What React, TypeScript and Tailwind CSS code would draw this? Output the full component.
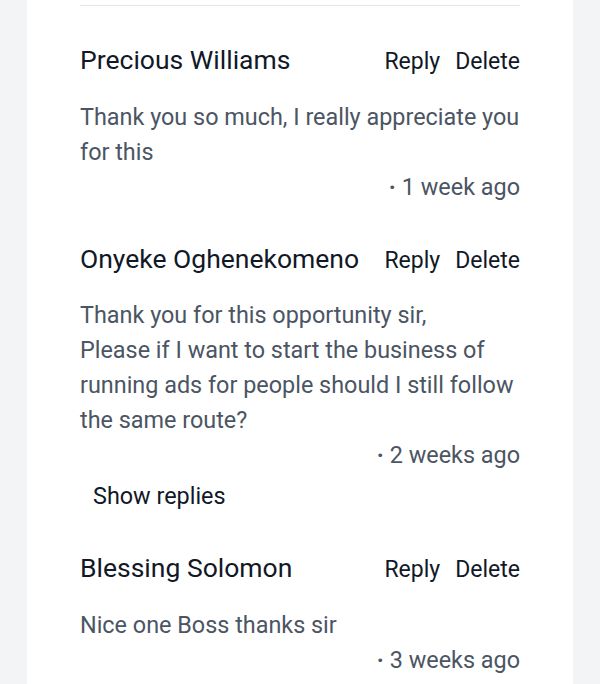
import React from "react";

type C = { name: string; body: string[]; time: string; replies?: boolean };

const comments: C[] = [
  {
    name: "Precious Williams",
    body: ["Thank you so much, I really appreciate you for this"],
    time: "1 week ago",
  },
  {
    name: "Onyeke Oghenekomeno",
    body: [
      "Thank you for this opportunity sir,",
      "Please if I want to start the business of running ads for people should I still follow the same route?",
    ],
    time: "2 weeks ago",
    replies: true,
  },
  {
    name: "Blessing Solomon",
    body: ["Nice one Boss thanks sir"],
    time: "3 weeks ago",
  },
];

export default function App() {
  return (
    <div
      className="min-h-screen bg-[#f3f4f6] flex justify-center"
      style={{ fontFamily: "Roboto, 'Noto Sans', sans-serif" }}
    >
      <div className="w-[546px] bg-white px-[53px] pt-[5px] pb-10">
        <div className="border-t border-[#e5e7eb]" />
        <div className="flex flex-col gap-[38px] pt-[38px]">
          {comments.map((c) => (
            <div key={c.name} className="flex flex-col">
              <div className="flex items-center justify-between h-[32px]">
                <span className="text-[26.5px] text-[#111827] whitespace-nowrap">{c.name}</span>
                <div className="flex gap-[15px] text-[23px] text-[#111827] pt-[5px]">
                  <span>Reply</span>
                  <span>Delete</span>
                </div>
              </div>
              <div className="mt-[24px] text-[23.4px] leading-[34.8px] text-[#4b5563]">
                {c.body.map((b, i) => (
                  <p key={i}>{b}</p>
                ))}
              </div>
              <div className="text-right text-[23.4px] leading-[34.8px] text-[#4b5563]">
                <span className="mr-[6px] font-bold">·</span>
                {c.time}
              </div>
              {c.replies && (
                <div className="mt-[7px] pl-[13px] text-[23.4px] leading-[34.8px] text-[#111827]">
                  Show replies
                </div>
              )}
            </div>
          ))}
        </div>
      </div>
    </div>
  );
}
